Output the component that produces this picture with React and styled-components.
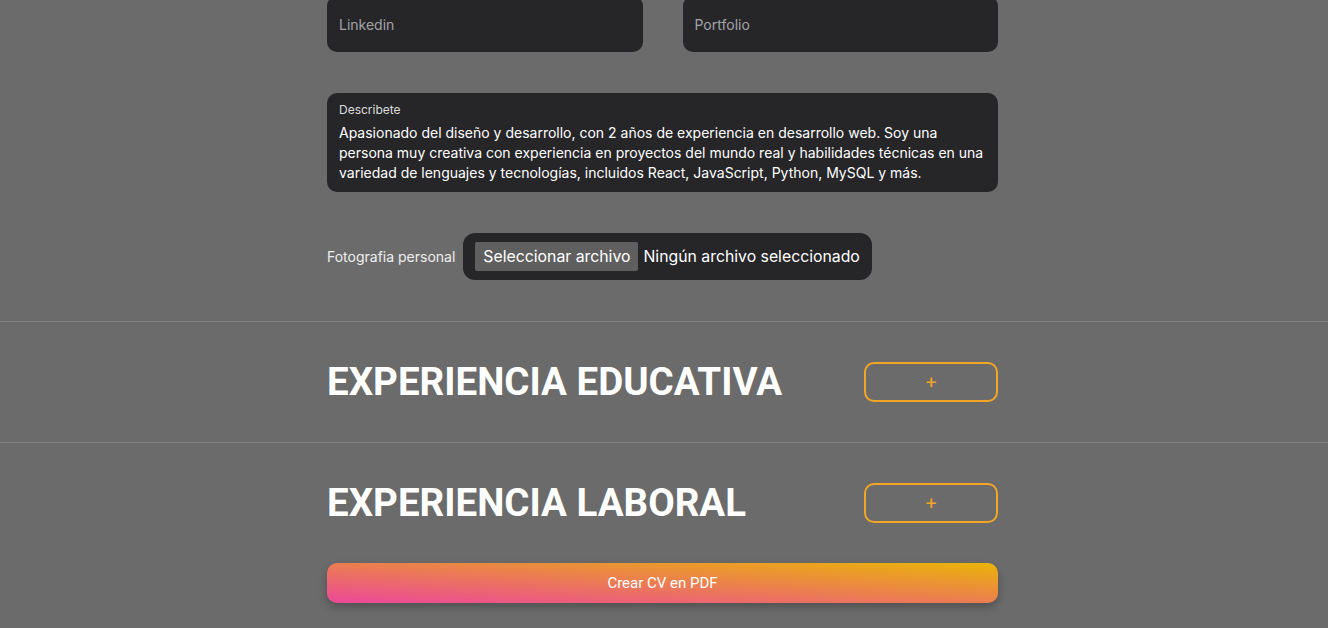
import styled, { createGlobalStyle } from "styled-components";

const GlobalStyle = createGlobalStyle`
    body {
        margin: 0;
        background: #6b6b6b;
        font-family: Inter, "Noto Sans", sans-serif;
        color: #fff;
        overflow: hidden;
    }
`;

const Page = styled.div`
    display: flex;
    flex-direction: column;
`;

const Container = styled.div`
    box-sizing: border-box;
    margin-left: calc(50% - 337px);
    width: 671px;
`;

const PersonalSection = styled(Container)`
    display: flex;
    flex-direction: column;
    gap: 41px;
    margin-top: -4px;
    padding-bottom: 41px;
`;

const Row = styled.div`
    display: flex;
    gap: 40px;
`;

const Field = styled.div`
    align-items: center;
    background: #262628;
    border-radius: 10px;
    box-sizing: border-box;
    color: #a3a3a8;
    display: flex;
    flex: 1;
    font-size: 14px;
    height: 56px;
    padding: 0 12px;
`;

const TextArea = styled.div`
    background: #262628;
    border-radius: 10px;
    box-sizing: border-box;
    padding: 9px 12px 9px;
`;

const SmallLabel = styled.div`
    color: #dcdcdc;
    font-size: 12px;
    line-height: 16px;
    margin-bottom: 5px;
`;

const Paragraph = styled.p`
    color: #fff;
    font-size: 14px;
    line-height: 20px;
    margin: 0;
`;

const FileRow = styled.div`
    align-items: center;
    display: flex;
    gap: 8px;
`;

const FileLabel = styled.span`
    color: #eee;
    font-size: 14px;
`;

const FileBox = styled.div`
    align-items: center;
    background: #262628;
    border-radius: 12px;
    display: flex;
    gap: 5px;
    padding: 9px 12px;
`;

const FileButton = styled.span`
    background: #5f5f60;
    border-radius: 2px;
    color: #fff;
    font-size: 15.8px;
    line-height: 29px;
    padding: 0 8px;
`;

const FileText = styled.span`
    color: #fff;
    font-size: 15.8px;
`;

const Section = styled.section`
    border-top: 1px solid #808080;
`;

const SectionInner = styled(Container)`
    display: flex;
    flex-direction: column;
    gap: 40px;
    padding: 40px 0;
`;

const SectionHeader = styled.div`
    align-items: center;
    display: flex;
    justify-content: space-between;
`;

const Title = styled.h2`
    color: #fff;
    font-family: Roboto, "Liberation Sans", sans-serif;
    font-size: 38.5px;
    font-weight: 700;
    line-height: 40px;
    margin: 0;
`;

const AddButton = styled.button`
    background: transparent;
    border: 2px solid #f5a524;
    border-radius: 10px;
    box-sizing: border-box;
    color: #f5a524;
    font-family: Inter, sans-serif;
    font-size: 20px;
    font-weight: 400;
    height: 40px;
    line-height: 1;
    padding: 0 0 3px;
    width: 134px;
`;

const PdfButton = styled.button`
    background: linear-gradient(to top right, #ec4899, #eab308);
    border: none;
    border-radius: 10px;
    box-shadow: 0 4px 8px rgba(0, 0, 0, 0.25);
    color: #fff;
    font-family: Roboto, sans-serif;
    font-size: 15px;
    height: 40px;
    width: 100%;
`;

const App = () => {
    return (
        <Page>
            <GlobalStyle />
            <PersonalSection>
                <Row>
                    <Field>Linkedin</Field>
                    <Field>Portfolio</Field>
                </Row>
                <TextArea>
                    <SmallLabel>Describete</SmallLabel>
                    <Paragraph>
                        Apasionado del diseño y desarrollo, con 2 años de experiencia en desarrollo web. Soy una
                        persona muy creativa con experiencia en proyectos del mundo real y habilidades técnicas en una
                        variedad de lenguajes y tecnologías, incluidos React, JavaScript, Python, MySQL y más.
                    </Paragraph>
                </TextArea>
                <FileRow>
                    <FileLabel>Fotografia personal</FileLabel>
                    <FileBox>
                        <FileButton>Seleccionar archivo</FileButton>
                        <FileText>Ningún archivo seleccionado</FileText>
                    </FileBox>
                </FileRow>
            </PersonalSection>
            <Section>
                <SectionInner>
                    <SectionHeader>
                        <Title>EXPERIENCIA EDUCATIVA</Title>
                        <AddButton>+</AddButton>
                    </SectionHeader>
                </SectionInner>
            </Section>
            <Section>
                <SectionInner>
                    <SectionHeader>
                        <Title>EXPERIENCIA LABORAL</Title>
                        <AddButton>+</AddButton>
                    </SectionHeader>
                    <PdfButton>Crear CV en PDF</PdfButton>
                </SectionInner>
            </Section>
        </Page>
    );
};

export default App;
